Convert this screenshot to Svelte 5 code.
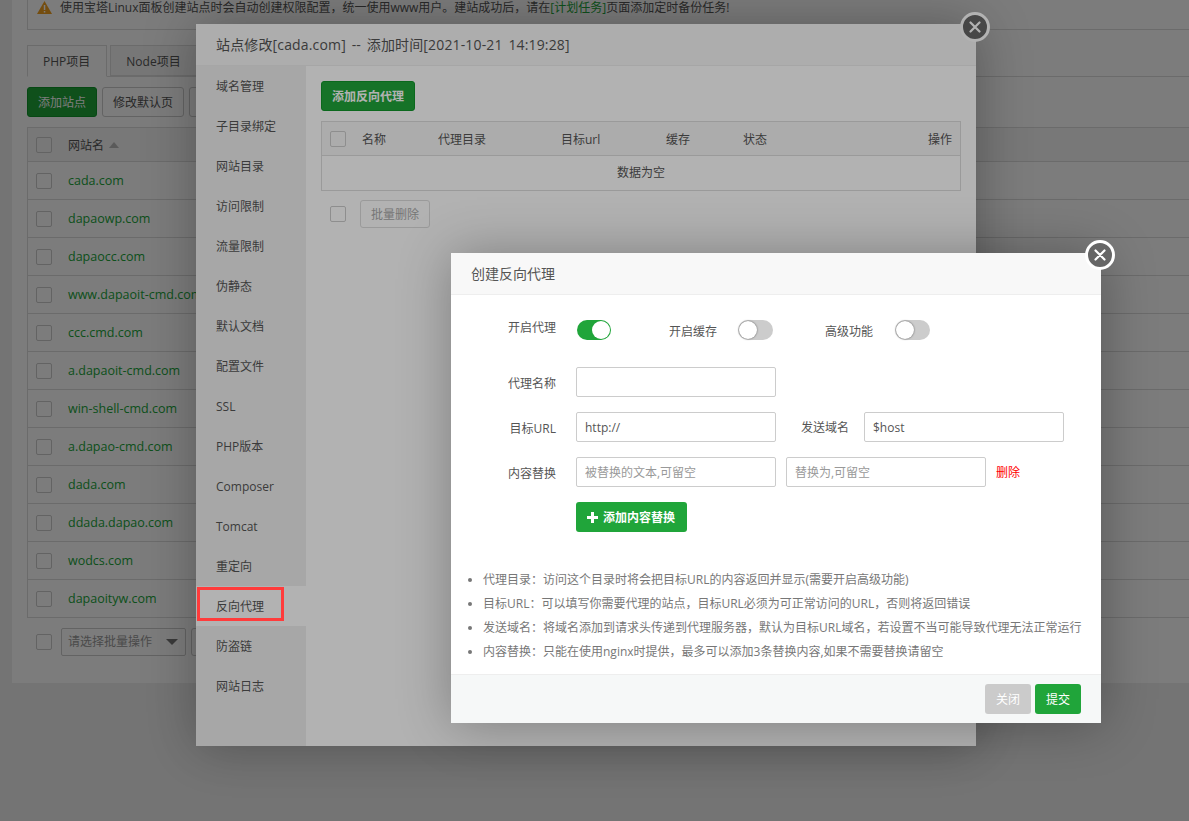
<script>
  const sites = [
    "cada.com",
    "dapaowp.com",
    "dapaocc.com",
    "www.dapaoit-cmd.com",
    "ccc.cmd.com",
    "a.dapaoit-cmd.com",
    "win-shell-cmd.com",
    "a.dapao-cmd.com",
    "dada.com",
    "ddada.dapao.com",
    "wodcs.com",
    "dapaoityw.com",
  ];

  const menu = [
    "域名管理",
    "子目录绑定",
    "网站目录",
    "访问限制",
    "流量限制",
    "伪静态",
    "默认文档",
    "配置文件",
    "SSL",
    "PHP版本",
    "Composer",
    "Tomcat",
    "重定向",
    "反向代理",
    "防盗链",
    "网站日志",
  ];

  // fullwidth punctuation
  const colon = "\uFF1A";
  const comma = "\uFF0C";

  const tips = [
    `代理目录${colon}访问这个目录时将会把目标URL的内容返回并显示(需要开启高级功能)`,
    `目标URL${colon}可以填写你需要代理的站点${comma}目标URL必须为可正常访问的URL${comma}否则将返回错误`,
    `发送域名${colon}将域名添加到请求头传递到代理服务器${comma}默认为目标URL域名${comma}若设置不当可能导致代理无法正常运行`,
    `内容替换${colon}只能在使用nginx时提供${comma}最多可以添加3条替换内容,如果不需要替换请留空`,
  ];

  let proxyOn = true;
  let cacheOn = false;
  let advancedOn = false;
</script>

<div class="page">
  <div class="panel">
    <div class="alert">
      <svg class="warn" width="15" height="13" viewBox="0 0 15 13">
        <path d="M7.5 0 L15 13 L0 13 Z" fill="#f0a020" />
        <rect x="6.8" y="4" width="1.5" height="5" fill="#fff" />
        <rect x="6.8" y="10" width="1.5" height="1.5" fill="#fff" />
      </svg>
      使用宝塔Linux面板创建站点时会自动创建权限配置{comma}统一使用www用户。建站成功后{comma}请在<span class="green">[计划任务]</span>页面添加定时备份任务!
    </div>

    <div class="tabs">
      <div class="tab on">PHP项目</div>
      <div class="tab">Node项目</div>
    </div>

    <div class="toolbar">
      <button class="btn primary">添加站点</button>
      <button class="btn">修改默认页</button>
      <button class="btn blank" aria-label="更多"></button>
    </div>

    <div class="sitetable">
      <div class="siterow head">
        <span class="check"></span>
        <span>网站名</span>
        <span class="sort"></span>
      </div>
      {#each sites as site}
        <div class="siterow">
          <span class="check"></span>
          <span class="green sitename">{site}</span>
        </div>
      {/each}
    </div>

    <div class="batch">
      <span class="check"></span>
      <div class="select">请选择批量操作<span class="caret"></span></div>
      <button class="btn blank batchgo" aria-label="执行"></button>
    </div>
  </div>

  <div class="shade"></div>

  <div class="dialog site-dialog">
    <button class="close" aria-label="关闭">
      <svg width="12" height="12" viewBox="0 0 12 12"><path d="M1.5 1.5 L10.5 10.5 M10.5 1.5 L1.5 10.5" stroke="#fff" stroke-width="2.2" stroke-linecap="round" /></svg>
    </button>
    <div class="dialog-title big">站点修改[cada.com] -- 添加时间[2021-10-21 14:19:28]</div>
    <div class="site-body">
      <div class="sidebar">
        {#each menu as item}
          <div class="menuitem" class:active={item === "反向代理"}>{item}</div>
        {/each}
      </div>
      <div class="content">
        <button class="btn primary addproxy">添加反向代理</button>
        <div class="proxytable">
          <div class="proxyhead">
            <span class="check"></span>
            <span class="c1">名称</span>
            <span class="c2">代理目录</span>
            <span class="c3">目标url</span>
            <span class="c4">缓存</span>
            <span class="c5">状态</span>
            <span class="c6">操作</span>
          </div>
          <div class="empty">数据为空</div>
        </div>
        <div class="bulk">
          <span class="check"></span>
          <button class="btn off">批量删除</button>
        </div>
      </div>
    </div>
  </div>

  <div class="shade"></div>

  <div class="dialog proxy-dialog">
    <button class="close" aria-label="关闭">
      <svg width="12" height="12" viewBox="0 0 12 12"><path d="M1.5 1.5 L10.5 10.5 M10.5 1.5 L1.5 10.5" stroke="#fff" stroke-width="2.2" stroke-linecap="round" /></svg>
    </button>
    <div class="dialog-title">创建反向代理</div>
    <div class="form">
      <div class="switches">
        <span class="label first">开启代理</span>
        <button class="switch" class:on={proxyOn} aria-label="开启代理" on:click={() => (proxyOn = !proxyOn)}></button>
        <span class="label second">开启缓存</span>
        <button class="switch" class:on={cacheOn} aria-label="开启缓存" on:click={() => (cacheOn = !cacheOn)}></button>
        <span class="label third">高级功能</span>
        <button class="switch" class:on={advancedOn} aria-label="高级功能" on:click={() => (advancedOn = !advancedOn)}></button>
      </div>
      <div class="row">
        <span class="label">代理名称</span>
        <input type="text" />
      </div>
      <div class="row">
        <span class="label">目标URL</span>
        <input type="text" value="http://" />
        <span class="label host">发送域名</span>
        <input type="text" value="$host" />
      </div>
      <div class="row">
        <span class="label">内容替换</span>
        <input type="text" placeholder="被替换的文本,可留空" />
        <input class="with" type="text" placeholder="替换为,可留空" />
        <span class="remove">删除</span>
      </div>
      <div class="row">
        <button class="btn addreplace">
          <svg width="11" height="11" viewBox="0 0 11 11"><path d="M4 0 H7 V4 H11 V7 H7 V11 H4 V7 H0 V4 H4 Z" fill="#fff" /></svg>
          添加内容替换
        </button>
      </div>
      <ul class="tips">
        {#each tips as tip}
          <li>{tip}</li>
        {/each}
      </ul>
    </div>
    <div class="footer">
      <button class="btn grey">关闭</button>
      <button class="btn submit">提交</button>
    </div>
  </div>

  <div class="marker"></div>
</div>

<style>
  :global(body) {
    background: #f0f0f0;
    font-family: "Open Sans", "Noto Sans CJK SC", sans-serif;
    font-size: 12px;
    color: #555;
  }

  .page {
    position: relative;
    height: 821px;
    overflow: hidden;
  }

  .panel {
    display: flow-root;
    width: 1400px;
    height: 683px;
    margin-left: 12px;
    padding: 0 15px;
    box-sizing: border-box;
    background: #fff;
  }

  .alert {
    height: 37px;
    margin-top: -7px;
    padding: 4px 9px;
    box-sizing: border-box;
    border: 1px solid #ddd;
  }

  .warn {
    margin-right: 5px;
    vertical-align: -2px;
  }

  .green {
    color: #20a53a;
  }

  .tabs {
    display: flex;
    gap: 3px;
    height: 32px;
    margin-top: 15px;
    margin-right: -15px;
    border-bottom: 1px solid #ddd;
    box-sizing: border-box;
  }

  .tab {
    height: 31px;
    line-height: 31px;
    padding: 0 16px 0 15px;
    box-sizing: border-box;
    border: 1px solid #ddd;
    background: #f5f5f5;
    text-align: center;
    font-size: 12px;
  }

  .tab.on {
    height: 32px;
    background: #fff;
    border-bottom-color: #fff;
  }

  .toolbar {
    display: flex;
    gap: 5px;
    margin-top: 10px;
  }

  .btn {
    height: 30px;
    padding: 0 10px;
    border: 1px solid #ccc;
    border-radius: 3px;
    background: #fff;
    color: #555;
    font: inherit;
    box-sizing: border-box;
  }

  .btn.blank {
    width: 80px;
  }

  .btn.primary {
    border-color: #10952a;
    background: #20a53a;
    color: #fff;
  }

  .sitetable {
    margin-top: 10px;
    border: 1px solid #ddd;
    border-right: 0;
  }

  .siterow {
    display: flex;
    align-items: center;
    height: 38px;
    padding-left: 8px;
    box-sizing: border-box;
    border-top: 1px solid #ddd;
  }

  .siterow.head {
    height: 33px;
    border-top: 0;
    background: #f6f6f6;
  }

  .check {
    flex: none;
    display: block;
    width: 16px;
    height: 16px;
    margin-right: 16px;
    border: 1px solid #ccc;
    border-radius: 2px;
    box-sizing: border-box;
  }

  .sitename {
    font-size: 12.5px;
  }

  .sort {
    width: 0;
    height: 0;
    margin-left: 5px;
    border: 5px solid transparent;
    border-top: 0;
    border-bottom: 6px solid #bbb;
  }

  .batch {
    display: flex;
    align-items: center;
    margin-top: 10px;
    padding-left: 9px;
  }

  .batch .check {
    margin-right: 9px;
  }

  .select {
    position: relative;
    width: 125px;
    height: 28px;
    line-height: 26px;
    padding-left: 6px;
    box-sizing: border-box;
    border: 1px solid #ccc;
    border-radius: 2px;
    color: #999;
    font-size: 12px;
  }

  .caret {
    position: absolute;
    top: 10px;
    right: 7px;
    border: 6px solid transparent;
    border-bottom: 0;
    border-top: 6px solid #777;
  }

  .batchgo {
    height: 28px;
    margin-left: 5px;
  }

  .shade {
    position: absolute;
    inset: 0;
    background: rgba(0, 0, 0, 0.3);
  }

  .dialog {
    position: absolute;
    background: #fff;
    box-shadow: 1px 1px 50px rgba(0, 0, 0, 0.3);
  }

  .site-dialog {
    left: 196px;
    top: 24px;
    width: 780px;
    height: 722px;
  }

  .proxy-dialog {
    left: 451px;
    top: 253px;
    width: 650px;
    height: 470px;
    display: flex;
    flex-direction: column;
  }

  .close {
    position: absolute;
    top: -12px;
    right: -14px;
    display: flex;
    align-items: center;
    justify-content: center;
    width: 30px;
    height: 30px;
    padding: 0;
    border: 3px solid #fff;
    border-radius: 50%;
    background: #666;
    box-sizing: border-box;
  }

  .proxy-dialog .close {
    top: -13px;
    right: -14px;
  }

  .dialog-title {
    height: 41px;
    line-height: 41px;
    padding-left: 20px;
    border-bottom: 1px solid #eee;
    background: #f8f8f8;
    box-sizing: content-box;
    font-size: 14px;
    color: #555;
  }

  .dialog-title.big {
    word-spacing: 2px;
    letter-spacing: 0.15px;
  }

  .site-body {
    display: flex;
    height: 680px;
  }

  .sidebar {
    width: 110px;
    flex: none;
    background: #f0f0f0;
  }

  .menuitem {
    height: 40px;
    line-height: 42px;
    padding-left: 20px;
    color: #555;
  }

  .menuitem.active {
    background: #fff;
  }

  .marker {
    position: absolute;
    left: 197px;
    top: 587px;
    width: 87px;
    height: 34px;
    box-sizing: border-box;
    border: 3px solid #ff3b3b;
  }

  .content {
    flex: 1;
    padding: 15px;
  }

  .addproxy {
    display: block;
    width: 94px;
    padding: 0;
    font-weight: 700;
  }

  .proxytable {
    width: 640px;
    margin-top: 10px;
    border: 1px solid #ddd;
    box-sizing: border-box;
  }

  .proxyhead {
    position: relative;
    display: flex;
    align-items: center;
    height: 33px;
    padding-left: 8px;
    border-bottom: 1px solid #ddd;
    background: #f6f6f6;
  }

  .proxyhead span:not(.check) {
    position: absolute;
  }

  .c1 { left: 40px; }
  .c2 { left: 116px; }
  .c3 { left: 239px; }
  .c4 { left: 344px; }
  .c5 { left: 421px; }
  .c6 { right: 8px; }

  .empty {
    height: 34px;
    line-height: 34px;
    text-align: center;
  }

  .bulk {
    display: flex;
    align-items: center;
    margin-top: 9px;
    padding-left: 9px;
  }

  .bulk .check {
    margin-right: 14px;
  }

  .btn.off {
    width: 70px;
    height: 28px;
    padding: 0;
    border-color: #ddd;
    color: #aaa;
  }

  .form {
    flex: 1;
    padding: 25px 15px 0 25px;
  }

  .switches {
    display: flex;
    align-items: flex-start;
    height: 47px;
  }

  .label {
    flex: none;
    width: 80px;
    margin-right: 20px;
    text-align: right;
    color: #555;
  }

  .row .label {
    padding-top: 2px;
  }

  .row .label.host {
    padding-top: 0;
  }

  .label.first {
    line-height: 15px;
    margin-right: 21px;
  }

  .label.second,
  .label.third {
    width: 48px;
    margin: 4px 21px 0 0;
    line-height: 15px;
  }

  .label.second {
    margin-left: 58px;
  }

  .label.third {
    margin-left: 52px;
    margin-right: 22px;
  }

  .switch {
    position: relative;
    width: 35px;
    height: 20px;
    padding: 0;
    border: 0;
    border-radius: 10px;
    background: #ccc;
  }

  .switch::after {
    content: "";
    position: absolute;
    top: 1px;
    left: 1px;
    width: 18px;
    height: 18px;
    border-radius: 50%;
    background: #fff;
    box-shadow: 0 0 2px rgba(0, 0, 0, 0.6);
  }

  .switch.on {
    width: 34px;
    background: #20a53a;
  }

  .switch.on::after {
    left: 15px;
    box-shadow: none;
  }

  .row {
    display: flex;
    align-items: center;
    height: 30px;
    margin-bottom: 15px;
  }

  .row:last-of-type {
    padding-left: 100px;
  }

  input {
    width: 200px;
    height: 30px;
    padding: 0 8px;
    border: 1px solid #ccc;
    border-radius: 2px;
    box-sizing: border-box;
    font: inherit;
    color: #555;
    outline: none;
  }

  input::placeholder {
    color: #999;
  }

  .with {
    margin-left: 10px;
  }

  .label.host {
    width: 48px;
    margin: 0 15px 0 25px;
  }

  .remove {
    margin-left: 10px;
    color: #f00;
  }

  .addreplace {
    display: flex;
    align-items: center;
    gap: 5px;
    width: 111px;
    padding: 0 0 0 11px;
    border: 0;
    background: #20a53a;
    color: #fff;
    font-weight: 700;
  }

  .tips {
    margin: 36px 0 0 -9px;
    padding: 0 0 0 16px;
    line-height: 24px;
    color: #777;
  }

  .tips li {
    white-space: nowrap;
  }

  .footer {
    display: flex;
    justify-content: flex-end;
    gap: 4px;
    height: 49px;
    padding: 9px 20px 0 0;
    box-sizing: border-box;
    border-top: 1px solid #eee;
    background: #f6f8f8;
  }

  .btn.grey,
  .btn.submit {
    width: 46px;
    padding: 0;
    border: 0;
    color: #fff;
  }

  .btn.grey {
    background: #cbcbcb;
  }

  .btn.submit {
    background: #20a53a;
  }
</style>
